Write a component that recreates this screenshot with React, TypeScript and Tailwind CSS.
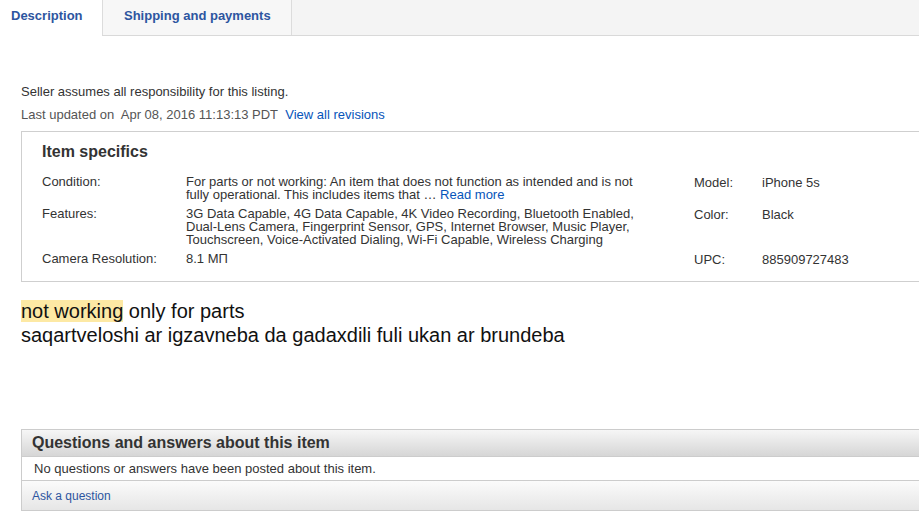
import React from "react";

export default function App() {
  const font = { fontFamily: '"Liberation Sans", Arial, sans-serif' };
  return (
    <div className="w-[919px] h-[513px] overflow-hidden bg-white" style={font}>
      {/* Tabs */}
      <div className="flex h-[36px] bg-[#f4f4f4] border-b border-[#d9d9d9] w-[960px]">
        <div className="w-[102px] h-[36px] bg-white flex items-center pl-[11px] pb-[5px] text-[13px] font-bold text-[#2d55a0]">
          Description
        </div>
        <div className="w-[190px] h-[35px] bg-[#f7f7f7] border-l border-r border-[#dcdcdc] flex items-center pl-[21px] pb-[4px] text-[13px] font-bold text-[#2d55a0]">
          Shipping and payments
        </div>
      </div>

      <div className="pl-[21px] pt-[48px]">
        <div className="text-[13px] leading-[16px] text-[#333]">Seller assumes all responsibility for this listing.</div>
        <div className="mt-[7px] text-[13px] leading-[16px] text-[#555]">
          Last updated on&nbsp; Apr 08, 2016 11:13:13 PDT&nbsp; <span className="text-[#0654ba]">View all revisions</span>
        </div>

        {/* Item specifics */}
        <div className="mt-[8px] w-[960px] h-[151px] border border-[#cfcfcf] pl-[20px] pt-[11px]">
          <div className="text-[16px] font-bold text-[#333] leading-[18px]">Item specifics</div>
          <div className="flex mt-[14px] text-[13px] leading-[13px] text-[#333]">
            <div className="w-[652px]">
              <div className="flex pb-[6px]">
                <div className="w-[144px]">Condition:</div>
                <div className="w-[470px]">
                  For parts or not working: An item that does not function as intended and is not fully operational. This includes items that … <span className="text-[#0654ba]">Read more</span>
                </div>
              </div>
              <div className="flex pb-[6px]">
                <div className="w-[144px]">Features:</div>
                <div className="w-[455px]">
                  3G Data Capable, 4G Data Capable, 4K Video Recording, Bluetooth Enabled, Dual-Lens Camera, Fingerprint Sensor, GPS, Internet Browser, Music Player, Touchscreen, Voice-Activated Dialing, Wi-Fi Capable, Wireless Charging
                </div>
              </div>
              <div className="flex">
                <div className="w-[144px]">Camera Resolution:</div>
                <div>8.1 МП</div>
              </div>
            </div>
            <div className="w-[250px]">
              <div className="flex h-[32px] pt-[1px]">
                <div className="w-[68px]">Model:</div>
                <div>iPhone 5s</div>
              </div>
              <div className="flex h-[45px] pt-[1px]">
                <div className="w-[68px]">Color:</div>
                <div>Black</div>
              </div>
              <div className="flex pt-[1px]">
                <div className="w-[68px]">UPC:</div>
                <div>885909727483</div>
              </div>
            </div>
          </div>
        </div>

        {/* Seller text */}
        <div className="mt-[17px] text-[20px] leading-[24px] text-[#111]">
          <div>
            <span className="bg-[#fde9a4]">not working</span> only for parts
          </div>
          <div>saqartveloshi ar igzavneba da gadaxdili fuli ukan ar brundeba</div>
        </div>

        {/* Q&A */}
        <div className="mt-[82px] w-[960px] border border-[#cccccc]">
          <div className="h-[27px] bg-gradient-to-b from-[#f6f6f6] to-[#d6d6d6] border-b border-[#cccccc] flex items-center pl-[10px]">
            <span className="text-[16px] font-bold text-[#333]">Questions and answers about this item</span>
          </div>
          <div className="h-[24px] bg-white border-b border-[#cccccc] flex items-center pl-[12px] text-[13px] text-[#333]">
            No questions or answers have been posted about this item.
          </div>
          <div className="h-[29px] bg-gradient-to-b from-[#fbfbfb] to-[#e6e6e6] flex items-center pl-[10px] text-[12px] text-[#2d55a0]">
            Ask a question
          </div>
        </div>
      </div>
    </div>
  );
}
